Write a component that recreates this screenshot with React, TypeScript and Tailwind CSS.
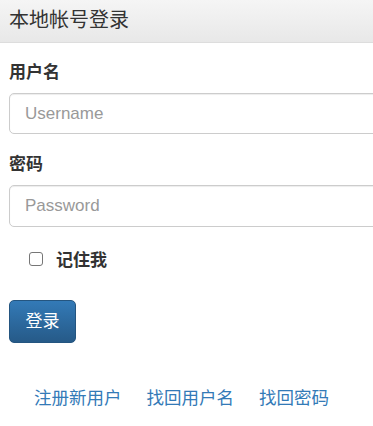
import React from "react";

const cjk = { fontFamily: '"Liberation Sans", "Noto Sans CJK SC", sans-serif' };

export default function App() {
  return (
    <div className="w-[373px] h-[426px] overflow-hidden bg-white text-[#333]" style={cjk}>
      <div className="h-[43px] border-b border-[#dddddd] bg-gradient-to-b from-[#f5f5f5] to-[#e8e8e8] px-[9px] flex items-center">
        <span className="text-[20px] leading-none pb-[2px]">本地帐号登录</span>
      </div>
      <div className="pl-[9px]">
        <div className="mt-[18px] h-[24px] leading-[24px] text-[17px] font-bold">用户名</div>
        <div className="mt-[8px] h-[41px] w-[400px] border border-[#cccccc] rounded-[5px] shadow-[inset_0_1px_1px_rgba(0,0,0,0.075)] flex items-center pl-[15px]">
          <span className="text-[17px] text-[#999999]">Username</span>
        </div>
        <div className="mt-[19px] h-[24px] leading-[24px] text-[17px] font-bold">密码</div>
        <div className="mt-[8px] h-[42px] w-[400px] border border-[#cccccc] rounded-[5px] shadow-[inset_0_1px_1px_rgba(0,0,0,0.075)] flex items-center pl-[15px]">
          <span className="text-[17px] text-[#999999]">Password</span>
        </div>
        <div className="mt-[20px] h-[24px] flex items-center pl-[20px]">
          <div className="w-[14px] h-[14px] border border-[#767676] rounded-[3px] bg-white" />
          <span className="ml-[13px] text-[17px] font-bold mt-[3px]">记住我</span>
        </div>
        <div className="mt-[29px] w-[67px] h-[43px] rounded-[5px] border border-[#245580] bg-gradient-to-b from-[#337ab7] to-[#265a88] flex items-center justify-center">
          <span className="text-[17px] text-white">登录</span>
        </div>
        <div className="mt-[43px] flex pl-[25px] gap-[25px] text-[17.5px] text-[#337ab7] leading-[24px]">
          <span>注册新用户</span>
          <span>找回用户名</span>
          <span>找回密码</span>
        </div>
      </div>
    </div>
  );
}
